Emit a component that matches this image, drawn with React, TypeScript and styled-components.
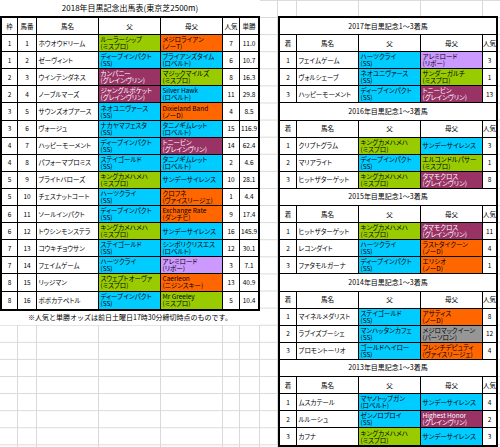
import React from "react";
import styled, { createGlobalStyle } from "styled-components";

const GlobalStyle = createGlobalStyle`
  *, *::before, *::after { box-sizing: border-box; }
  html, body { margin: 0; padding: 0; background: #fff; }
  body { font-family: "Noto Sans CJK JP", "Noto Sans", sans-serif; color: #000; }
`;

const GRID = "#d9d9d9";
const lineXs = [17, 36, 98, 160, 222, 239, 259, 277, 296, 358, 420, 482];
const vline = (x: number) =>
  `linear-gradient(${GRID}, ${GRID}) ${x}px 0 / 1px 100% no-repeat`;

const Sheet = styled.div`
  width: 500px;
  height: 447px;
  overflow: hidden;
  display: flex;
  align-items: flex-start;
  background: ${lineXs.map(vline).join(", ")},
    linear-gradient(to bottom, transparent 16.1px, ${GRID} 16.1px) 0 0.9px / 100% 17.1px repeat,
    #fff;
`;

const LeftBlock = styled.div`
  width: 260px;
  flex-shrink: 0;
  display: flex;
  flex-direction: column;
`;

const RightBlock = styled.div`
  margin-left: 18px;
  margin-top: 16px;
  flex-shrink: 0;
`;

const SheetTitle = styled.div`
  height: 16px;
  background: #fff;
  display: flex;
  align-items: center;
  justify-content: center;
  font-size: 8px;
  line-height: 1;
  white-space: nowrap;
`;

const Note = styled.div`
  height: 14.1px;
  background: #fff;
  display: flex;
  align-items: center;
  justify-content: center;
  font-size: 7px;
  line-height: 1;
  white-space: nowrap;
`;

const Table = styled.div<{ $w: number }>`
  width: ${(p) => p.$w}px;
  border: 2px solid #000;
  background: #fff;
  display: flex;
  flex-direction: column;
`;

const Row = styled.div<{ $cols: string }>`
  display: grid;
  grid-template-columns: ${(p) => p.$cols};
  height: 17.1px;
  border-bottom: 1px solid #000;
  &:last-child {
    border-bottom: 0;
  }
`;

const TitleRow = styled.div`
  height: 17.1px;
  border-bottom: 1px solid #000;
  display: flex;
  align-items: center;
  justify-content: center;
  font-size: 7px;
  line-height: 1;
  white-space: nowrap;
`;

const Cell = styled.div<{ $bg?: string; $light?: boolean; $left?: boolean }>`
  border-right: 1px solid #000;
  background: ${(p) => p.$bg || "#fff"};
  color: ${(p) => (p.$light ? "#fff" : "#000")};
  display: flex;
  flex-direction: column;
  justify-content: center;
  align-items: ${(p) => (p.$left ? "flex-start" : "center")};
  padding-left: ${(p) => (p.$left ? "1.5px" : "0")};
  overflow: hidden;
  white-space: nowrap;
  font-size: 6.5px;
  line-height: 7px;
  font-feature-settings: "palt";
  &:last-child {
    border-right: 0;
  }
`;

const Line = styled.span`
  display: block;
`;

type CK = "G" | "C" | "O" | "P" | "L" | "S";
const COLORS: Record<CK, string> = {
  G: "#99cc00",
  C: "#00ccff",
  O: "#ff6600",
  P: "#993366",
  L: "#cc99ff",
  S: "#969696",
};

type Ped = { a: string; b?: string; c: CK };
const pd = (a: string, b: string | undefined, c: CK): Ped => ({ a, b, c });

const PedCell = ({ p }: { p: Ped }) => (
  <Cell $bg={COLORS[p.c]} $light={p.c === "P"} $left>
    <Line>{p.a}</Line>
    {p.b && <Line>{p.b}</Line>}
  </Cell>
);

type Entry = {
  waku: number;
  ban: number;
  name: string;
  sire: Ped;
  dam: Ped;
  pop: number;
  odds: string;
};

const entries: Entry[] = [
  { waku: 1, ban: 1, name: "ホウオウドリーム", sire: pd("ルーラーシップ", "(ミスプロ)", "G"), dam: pd("メジロライアン", "(ノーT)", "O"), pop: 7, odds: "11.0" },
  { waku: 1, ban: 2, name: "ゼーヴィント", sire: pd("ディープインパクト", "(SS)", "C"), dam: pd("ブライアンズタイム", "(ロベルト)", "C"), pop: 6, odds: "10.7" },
  { waku: 2, ban: 3, name: "ウインテンダネス", sire: pd("カンパニー", "(グレインヴリン)", "P"), dam: pd("マジックマイルズ", "(ミスプロ)", "G"), pop: 8, odds: "16.3" },
  { waku: 2, ban: 4, name: "ノーブルマーズ", sire: pd("ジャングルポケット", "(グレインヴリン)", "P"), dam: pd("Silver Hawk", "(ロベルト)", "C"), pop: 11, odds: "29.8" },
  { waku: 3, ban: 5, name: "サウンズオブアース", sire: pd("ネオユニヴァース", "(SS)", "C"), dam: pd("Dixieland Band", "(ノーD)", "O"), pop: 4, odds: "8.5" },
  { waku: 3, ban: 6, name: "ヴォージュ", sire: pd("ナカヤマフェスタ", "(SS)", "C"), dam: pd("タニノギムレット", "(ロベルト)", "C"), pop: 15, odds: "116.9" },
  { waku: 4, ban: 7, name: "ハッピーモーメント", sire: pd("ディープインパクト", "(SS)", "C"), dam: pd("トニービン", "(グレインヴリン)", "P"), pop: 14, odds: "62.4" },
  { waku: 4, ban: 8, name: "パフォーマプロミス", sire: pd("ステイゴールド", "(SS)", "C"), dam: pd("タニノギムレット", "(ロベルト)", "C"), pop: 2, odds: "4.6" },
  { waku: 5, ban: 9, name: "ブライトバローズ", sire: pd("キングカメハメハ", "(ミスプロ)", "G"), dam: pd("サンデーサイレンス", undefined, "C"), pop: 10, odds: "28.1" },
  { waku: 5, ban: 10, name: "チェスナットコート", sire: pd("ハーツクライ", "(SS)", "C"), dam: pd("クロフネ", "(ヴァイスリージェ)", "O"), pop: 1, odds: "4.4" },
  { waku: 6, ban: 11, name: "ソールインパクト", sire: pd("ディープインパクト", "(SS)", "C"), dam: pd("Exchange Rate", "(ダンチヒ)", "O"), pop: 9, odds: "17.4" },
  { waku: 6, ban: 12, name: "トウシンモンステラ", sire: pd("キングカメハメハ", "(ミスプロ)", "G"), dam: pd("サンデーサイレンス", undefined, "C"), pop: 16, odds: "145.9" },
  { waku: 7, ban: 13, name: "コウキチョウサン", sire: pd("ステイゴールド", "(SS)", "C"), dam: pd("シンボリクリスエス", "(ロベルト)", "C"), pop: 12, odds: "30.1" },
  { waku: 7, ban: 14, name: "フェイムゲーム", sire: pd("ハーツクライ", "(SS)", "C"), dam: pd("アレミロード", "(リボー)", "L"), pop: 3, odds: "7.1" },
  { waku: 8, ban: 15, name: "リッジマン", sire: pd("スウェプトオーヴァ", "(ミスプロ)", "G"), dam: pd("Caerleon", "(ニジンスキー)", "O"), pop: 13, odds: "40.9" },
  { waku: 8, ban: 16, name: "ポポカテペトル", sire: pd("ディープインパクト", "(SS)", "C"), dam: pd("Mr Greeley", "(ミスプロ)", "G"), pop: 5, odds: "10.4" },
];

type Past = { rank: number; name: string; sire: Ped; dam: Ped; pop: number };
type Year = { year: number; rows: Past[] };

const years: Year[] = [
  {
    year: 2017,
    rows: [
      { rank: 1, name: "フェイムゲーム", sire: pd("ハーツクライ", "(SS)", "C"), dam: pd("アレミロード", "(リボー)", "L"), pop: 3 },
      { rank: 2, name: "ヴォルシェーブ", sire: pd("ネオユニヴァース", "(SS)", "C"), dam: pd("サンダーガルチ", "(ミスプロ)", "G"), pop: 1 },
      { rank: 3, name: "ハッピーモーメント", sire: pd("ディープインパクト", "(SS)", "C"), dam: pd("トニービン", "(グレインヴリン)", "P"), pop: 13 },
    ],
  },
  {
    year: 2016,
    rows: [
      { rank: 1, name: "クリプトグラム", sire: pd("キングカメハメハ", "(ミスプロ)", "G"), dam: pd("サンデーサイレンス", undefined, "C"), pop: 3 },
      { rank: 2, name: "マリアライト", sire: pd("ディープインパクト", "(SS)", "C"), dam: pd("エルコンドルパサー", "(ミスプロ)", "G"), pop: 1 },
      { rank: 3, name: "ヒットザターゲット", sire: pd("キングカメハメハ", "(ミスプロ)", "G"), dam: pd("タマモクロス", "(グレインヴリン)", "P"), pop: 8 },
    ],
  },
  {
    year: 2015,
    rows: [
      { rank: 1, name: "ヒットザターゲット", sire: pd("キングカメハメハ", "(ミスプロ)", "G"), dam: pd("タマモクロス", "(グレインヴリン)", "P"), pop: 11 },
      { rank: 2, name: "レコンダイト", sire: pd("ハーツクライ", "(SS)", "C"), dam: pd("ラストタイクーン", "(ノーD)", "O"), pop: 4 },
      { rank: 3, name: "ファタモルガーナ", sire: pd("ディープインパクト", "(SS)", "C"), dam: pd("エリシオ", "(ノーD)", "O"), pop: 1 },
    ],
  },
  {
    year: 2014,
    rows: [
      { rank: 1, name: "マイネルメダリスト", sire: pd("ステイゴールド", "(SS)", "C"), dam: pd("アサティス", "(ノーD)", "O"), pop: 8 },
      { rank: 2, name: "ラブイズブーシェ", sire: pd("マンハッタンカフェ", "(SS)", "C"), dam: pd("メジロマックイーン", "(パーソロン)", "S"), pop: 12 },
      { rank: 3, name: "プロモントーリオ", sire: pd("ゴールドヘイロー", "(SS)", "C"), dam: pd("フレンチデピュティ", "(ヴァイスリージェ)", "O"), pop: 4 },
    ],
  },
  {
    year: 2013,
    rows: [
      { rank: 1, name: "ムスカテール", sire: pd("マヤノトップガン", "(ロベルト)", "C"), dam: pd("サンデーサイレンス", undefined, "C"), pop: 4 },
      { rank: 2, name: "ルルーシュ", sire: pd("ゼンノロブロイ", "(SS)", "C"), dam: pd("Highest Honor", "(グレインヴリン)", "P"), pop: 2 },
      { rank: 3, name: "カフナ", sire: pd("キングカメハメハ", "(ミスプロ)", "G"), dam: pd("サンデーサイレンス", undefined, "C"), pop: 3 },
    ],
  },
];

const LEFT_COLS = "16px 19px 62px 62px 62px 17px 18px";
const RIGHT_COLS = "17px 62px 62px 62px 13px";

export default function App() {
  return (
    <>
      <GlobalStyle />
      <Sheet>
        <LeftBlock>
          <SheetTitle>2018年目黒記念出馬表(東京芝2500m)</SheetTitle>
          <Table $w={260}>
            <Row $cols={LEFT_COLS}>
              <Cell>枠</Cell>
              <Cell>馬番</Cell>
              <Cell>馬名</Cell>
              <Cell>父</Cell>
              <Cell>母父</Cell>
              <Cell>人気</Cell>
              <Cell>単勝</Cell>
            </Row>
            {entries.map((e) => (
              <Row $cols={LEFT_COLS} key={e.ban}>
                <Cell>{e.waku}</Cell>
                <Cell>{e.ban}</Cell>
                <Cell $left>{e.name}</Cell>
                <PedCell p={e.sire} />
                <PedCell p={e.dam} />
                <Cell>{e.pop}</Cell>
                <Cell>{e.odds}</Cell>
              </Row>
            ))}
          </Table>
          <Note>※人気と単勝オッズは前日土曜日17時30分締切時点のものです。</Note>
        </LeftBlock>
        <RightBlock>
          <Table $w={220}>
            {years.map((y) => (
              <React.Fragment key={y.year}>
                <TitleRow>{y.year}年目黒記念1～3着馬</TitleRow>
                <Row $cols={RIGHT_COLS}>
                  <Cell>着</Cell>
                  <Cell>馬名</Cell>
                  <Cell>父</Cell>
                  <Cell>母父</Cell>
                  <Cell>人気</Cell>
                </Row>
                {y.rows.map((r) => (
                  <Row $cols={RIGHT_COLS} key={r.rank}>
                    <Cell>{r.rank}</Cell>
                    <Cell $left>{r.name}</Cell>
                    <PedCell p={r.sire} />
                    <PedCell p={r.dam} />
                    <Cell>{r.pop}</Cell>
                  </Row>
                ))}
              </React.Fragment>
            ))}
          </Table>
        </RightBlock>
      </Sheet>
    </>
  );
}
